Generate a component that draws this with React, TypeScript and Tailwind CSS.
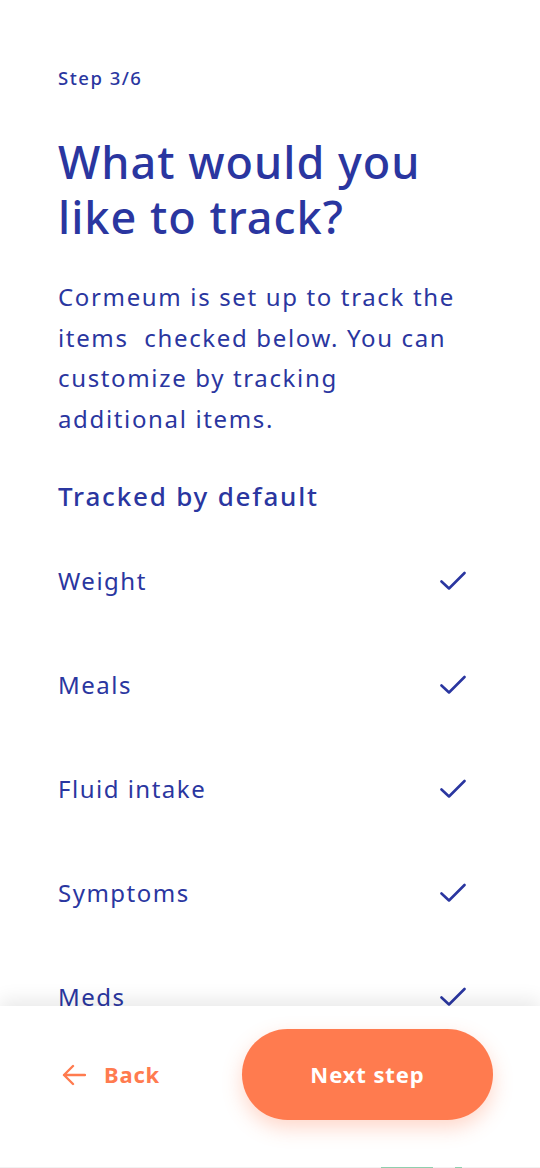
import React from 'react';

const items = ['Weight', 'Meals', 'Fluid intake', 'Symptoms', 'Meds'];

function Check() {
  return (
    <svg width="26" height="20" viewBox="0 0 26 20" fill="none" className="shrink-0">
      <path d="M1.5 10.5 L9 17.5 L24.5 2" stroke="#2a36a0" strokeWidth="2.6" strokeLinecap="round" strokeLinejoin="round" />
    </svg>
  );
}

export default function App() {
  return (
    <div
      className="relative flex h-[1168px] w-[540px] flex-col overflow-hidden bg-white text-[#2a36a0]"
      style={{ fontFamily: '"Noto Sans", "Open Sans", sans-serif' }}
    >
      {/* Scrollable content */}
      <div className="flex-1 overflow-hidden pl-[58px] pr-[58px] pt-[66px]">
        <p className="text-[18.5px] font-medium leading-[24px] tracking-[1.5px]">Step 3/6</p>

        <h1 className="mt-[44px] text-[45px] font-medium leading-[55px] tracking-[1px]">
          What would you
          <br />
          like to track?
        </h1>

        <p className="mt-[33px] whitespace-nowrap text-[24px] leading-[40.7px] tracking-[1.65px]">
          Cormeum is set up to track the
          <br />
          items&nbsp; checked below. You can
          <br />
          customize by tracking
          <br />
          additional items.
        </p>

        <h2 className="mt-[40px] text-[26px] font-medium leading-[32px] tracking-[1.8px]">Tracked by default</h2>

        <ul className="mt-[17px]">
          {items.map((item) => (
            <li key={item} className="flex h-[104px] items-center justify-between pr-[16px]">
              <span className="text-[24px] leading-[30px] tracking-[1.5px]">{item}</span>
              <Check />
            </li>
          ))}
        </ul>
      </div>

      {/* Footer */}
      <div className="relative flex h-[162px] shrink-0 flex-col bg-white shadow-[0_-6px_18px_rgba(0,0,0,0.09)]">
        <div className="flex flex-1 items-start justify-between pl-[62px] pr-[47px] pt-[23px]">
          <button className="flex h-[91px] items-center gap-[18px] text-[#ff7b4f]">
            <svg width="24" height="22" viewBox="0 0 24 22" fill="none">
              <path d="M11 2 L2 11 L11 20 M2 11 H23" stroke="#ff7b4f" strokeWidth="2.4" strokeLinecap="round" strokeLinejoin="round" />
            </svg>
            <span className="text-[22px] font-bold tracking-[0.8px]">Back</span>
          </button>
          <button className="flex h-[91px] w-[251px] items-center justify-center rounded-full bg-[#ff7b4f] text-[22px] font-bold tracking-[0.9px] text-white shadow-[0_8px_20px_rgba(255,123,79,0.3)]">
            Next step
          </button>
        </div>
        <div className="flex h-px w-full bg-[#f2f2f2]">
          <div className="ml-[381px] h-px w-[52px] bg-[#8fcfae]" />
          <div className="ml-[22px] h-px w-[7px] bg-[#8fcfae]" />
        </div>
      </div>
    </div>
  );
}
